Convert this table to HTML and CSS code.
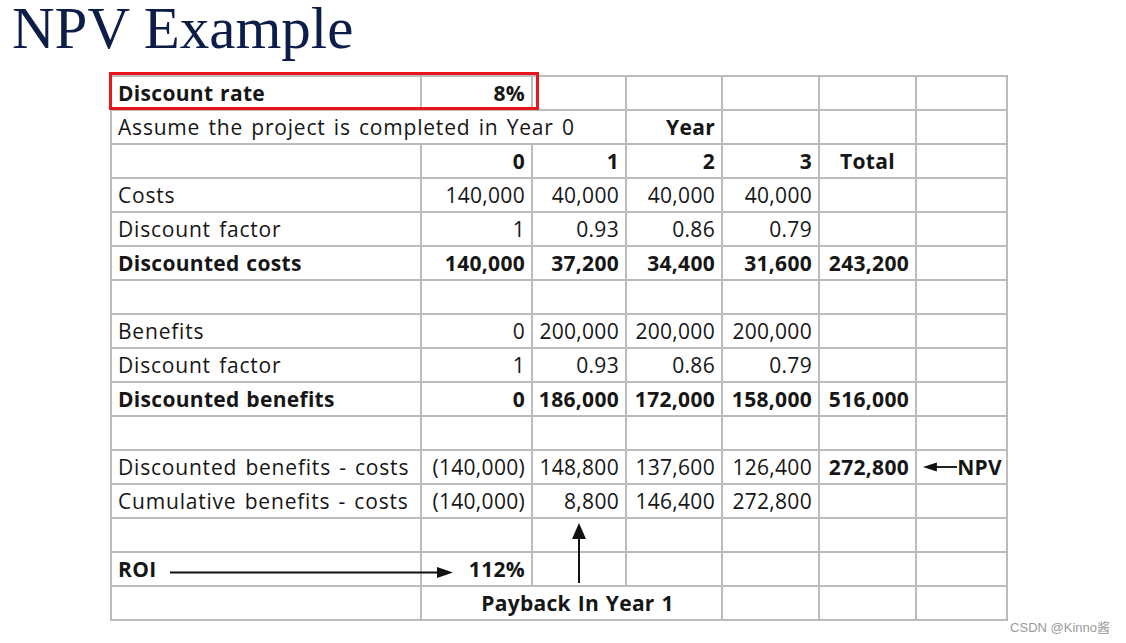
FILE: index.html
```html
<!DOCTYPE html>
<html>
<head>
<meta charset="utf-8">
<link rel="stylesheet" href="styles.css">
</head>
<body>
<h1 class="title">NPV Example</h1>
<div class="sheet-wrap">
  <div class="sheet">
    <!-- row 1 -->
    <div class="c b">Discount rate</div>
    <div class="c r b">8%</div>
    <div class="c"></div><div class="c"></div><div class="c"></div><div class="c"></div><div class="c"></div>
    <!-- row 2 -->
    <div class="c lbl span3">Assume the project is completed in Year 0</div>
    <div class="c r b">Year</div>
    <div class="c"></div><div class="c"></div><div class="c"></div>
    <!-- row 3 -->
    <div class="c"></div>
    <div class="c r b">0</div>
    <div class="c r b">1</div>
    <div class="c r b">2</div>
    <div class="c r b">3</div>
    <div class="c ctr b">Total</div>
    <div class="c"></div>
    <!-- row 4 -->
    <div class="c lbl">Costs</div>
    <div class="c r">140,000</div>
    <div class="c r">40,000</div>
    <div class="c r">40,000</div>
    <div class="c r">40,000</div>
    <div class="c"></div><div class="c"></div>
    <!-- row 5 -->
    <div class="c lbl">Discount factor</div>
    <div class="c r">1</div>
    <div class="c r">0.93</div>
    <div class="c r">0.86</div>
    <div class="c r">0.79</div>
    <div class="c"></div><div class="c"></div>
    <!-- row 6 -->
    <div class="c b">Discounted costs</div>
    <div class="c r b">140,000</div>
    <div class="c r b">37,200</div>
    <div class="c r b">34,400</div>
    <div class="c r b">31,600</div>
    <div class="c r b">243,200</div>
    <div class="c"></div>
    <!-- row 7 -->
    <div class="c"></div><div class="c"></div><div class="c"></div><div class="c"></div><div class="c"></div><div class="c"></div><div class="c"></div>
    <!-- row 8 -->
    <div class="c lbl">Benefits</div>
    <div class="c r">0</div>
    <div class="c r">200,000</div>
    <div class="c r">200,000</div>
    <div class="c r">200,000</div>
    <div class="c"></div><div class="c"></div>
    <!-- row 9 -->
    <div class="c lbl">Discount factor</div>
    <div class="c r">1</div>
    <div class="c r">0.93</div>
    <div class="c r">0.86</div>
    <div class="c r">0.79</div>
    <div class="c"></div><div class="c"></div>
    <!-- row 10 -->
    <div class="c b">Discounted benefits</div>
    <div class="c r b">0</div>
    <div class="c r b">186,000</div>
    <div class="c r b">172,000</div>
    <div class="c r b">158,000</div>
    <div class="c r b">516,000</div>
    <div class="c"></div>
    <!-- row 11 -->
    <div class="c"></div><div class="c"></div><div class="c"></div><div class="c"></div><div class="c"></div><div class="c"></div><div class="c"></div>
    <!-- row 12 -->
    <div class="c lbl">Discounted benefits - costs</div>
    <div class="c r">(140,000)</div>
    <div class="c r">148,800</div>
    <div class="c r">137,600</div>
    <div class="c r">126,400</div>
    <div class="c r b">272,800</div>
    <div class="c r b npv">
      <svg class="npv-arrow" width="37" height="12" viewBox="0 0 37 12"><line x1="12" y1="6" x2="37" y2="6" stroke="#111" stroke-width="2"/><polygon points="0,6 15,1 15,11" fill="#111"/></svg>NPV
    </div>
    <!-- row 13 -->
    <div class="c lbl">Cumulative benefits - costs</div>
    <div class="c r">(140,000)</div>
    <div class="c r">8,800</div>
    <div class="c r">146,400</div>
    <div class="c r">272,800</div>
    <div class="c"></div><div class="c"></div>
    <!-- row 14 -->
    <div class="c"></div><div class="c"></div><div class="c"></div><div class="c"></div><div class="c"></div><div class="c"></div><div class="c"></div>
    <!-- row 15 -->
    <div class="c b">ROI</div>
    <div class="c r b">112%</div>
    <div class="c"></div><div class="c"></div><div class="c"></div><div class="c"></div><div class="c"></div>
    <!-- row 16 -->
    <div class="c"></div>
    <div class="c span3 ctr b payback">Payback In Year 1</div>
    <div class="c"></div><div class="c"></div><div class="c"></div>
  </div>
  <div class="highlight"></div>
  <svg class="annotations" width="898" height="546" viewBox="0 0 898 546">
    <line x1="60" y1="497.5" x2="330" y2="497.5" stroke="#111" stroke-width="2"/>
    <polygon points="343,497.5 327,492 327,503" fill="#111"/>
    <line x1="469" y1="460" x2="469" y2="508" stroke="#111" stroke-width="2"/>
    <polygon points="469,448 462,464 476,464" fill="#111"/>
  </svg>
</div>
<div class="watermark">CSDN @Kinno酱</div>
</body>
</html>
```
FILE: styles.css
```css
html, body {
  margin: 0;
  padding: 0;
  background: #ffffff;
}
body {
  position: relative;
  width: 1126px;
  height: 643px;
  overflow: hidden;
}
.title {
  margin: 0 0 0 12px;
  font-family: "Liberation Serif", "Times New Roman", serif;
  font-weight: normal;
  font-size: 59px;
  line-height: 56px;
  color: #0d1d4a;
}
.sheet-wrap {
  position: relative;
  margin: 19px 0 0 110px;
  width: 898px;
}
.sheet {
  display: grid;
  grid-template-columns: 308px 109px 92px 94px 95px 95px 89px;
  grid-auto-rows: 32px;
  gap: 2px;
  padding: 2px;
  background: #bcbcbc;
  font-family: "Open Sans", "Noto Sans", sans-serif;
  font-size: 21px;
  letter-spacing: 0.3px;
  word-spacing: 1px;
  color: #161616;
}
.c {
  background: #ffffff;
  display: flex;
  align-items: center;
  padding: 0 6px;
  white-space: nowrap;
  overflow: visible;
}
.lbl {
  letter-spacing: 0.8px;
  word-spacing: 2px;
}
.r { justify-content: flex-end; }
.ctr { justify-content: center; }
.b { font-weight: 700; }
.span3 { grid-column: span 3; }
.payback { padding-left: 18px; }
.npv { padding-right: 4px; }
.npv-arrow { display: block; margin-right: 0; }
.highlight {
  position: absolute;
  left: -1px;
  top: -3px;
  width: 424px;
  height: 32px;
  border: 3px solid #e8141c;
}
.annotations {
  position: absolute;
  left: 0;
  top: 0;
  pointer-events: none;
}
.watermark {
  position: absolute;
  right: 16px;
  bottom: 7px;
  font-family: "Liberation Sans", Arial, "Noto Sans CJK SC", sans-serif;
  font-size: 13px;
  color: #9a9a9a;
}
```
